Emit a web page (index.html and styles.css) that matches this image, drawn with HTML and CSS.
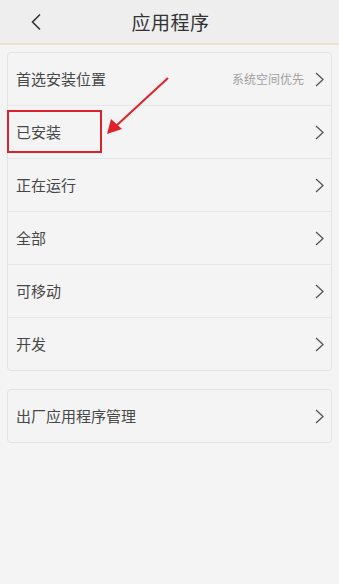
FILE: index.html
```html
<!DOCTYPE html>
<html lang="zh">
<head>
<meta charset="utf-8">
<link rel="stylesheet" href="styles.css">
</head>
<body>
<div class="page">
  <header class="bar">
    <svg class="back" width="12" height="18" viewBox="0 0 12 18"><path d="M10 1.5 L2.5 9 L10 16.5" fill="none" stroke="#333" stroke-width="1.6"/></svg>
    <div class="title">应用程序</div>
  </header>
  <div class="card">
    <div class="row"><span class="label">首选安装位置</span><span class="value">系统空间优先</span><svg class="chev" width="9" height="15" viewBox="0 0 9 15"><path d="M1 1 L8 7.5 L1 14" fill="none" stroke="#555" stroke-width="1.3"/></svg></div>
    <div class="row"><span class="label">已安装</span><svg class="chev" width="9" height="15" viewBox="0 0 9 15"><path d="M1 1 L8 7.5 L1 14" fill="none" stroke="#555" stroke-width="1.3"/></svg></div>
    <div class="row"><span class="label">正在运行</span><svg class="chev" width="9" height="15" viewBox="0 0 9 15"><path d="M1 1 L8 7.5 L1 14" fill="none" stroke="#555" stroke-width="1.3"/></svg></div>
    <div class="row"><span class="label">全部</span><svg class="chev" width="9" height="15" viewBox="0 0 9 15"><path d="M1 1 L8 7.5 L1 14" fill="none" stroke="#555" stroke-width="1.3"/></svg></div>
    <div class="row"><span class="label">可移动</span><svg class="chev" width="9" height="15" viewBox="0 0 9 15"><path d="M1 1 L8 7.5 L1 14" fill="none" stroke="#555" stroke-width="1.3"/></svg></div>
    <div class="row"><span class="label">开发</span><svg class="chev" width="9" height="15" viewBox="0 0 9 15"><path d="M1 1 L8 7.5 L1 14" fill="none" stroke="#555" stroke-width="1.3"/></svg></div>
  </div>
  <div class="card second">
    <div class="row"><span class="label">出厂应用程序管理</span><svg class="chev" width="9" height="15" viewBox="0 0 9 15"><path d="M1 1 L8 7.5 L1 14" fill="none" stroke="#555" stroke-width="1.3"/></svg></div>
  </div>
  <div class="highlight"></div>
  <svg class="arrow" width="339" height="200" viewBox="0 0 339 200">
    <line x1="168" y1="78" x2="116" y2="126" stroke="#e0222a" stroke-width="2"/>
    <path d="M107 134 L111 119 L122 129 Z" fill="#e0222a"/>
  </svg>
</div>
</body>
</html>
```
FILE: styles.css
```css
html, body { margin: 0; padding: 0; }
body {
  background: #f4f4f4;
  font-family: "Noto Sans CJK SC", "Noto Sans", sans-serif;
  width: 339px;
  height: 584px;
  overflow: hidden;
}
.page { position: relative; height: 584px; }
.bar {
  height: 43px;
  background: #eeeeee;
  border-bottom: 2px solid #efe1d2;
  display: flex;
  align-items: center;
  justify-content: center;
  position: relative;
}
.back { position: absolute; left: 30px; top: 13px; }
.title { font-size: 19px; color: #333; letter-spacing: 0.5px; padding-left: 2px; }
.card {
  margin: 7px 7px 0 7px;
  border: 1px solid #e3e3e3;
  border-radius: 4px;
  background: #f4f4f4;
}
.card.second { margin-top: 18px; }
.row {
  height: 52px;
  display: flex;
  align-items: center;
  padding: 0 7px 0 8px;
  border-top: 1px solid #e6e6e6;
}
.row:first-child { border-top: none; }
.label { font-size: 15px; color: #474747; flex: 1; margin-top: -2px; }
.value { font-size: 12px; color: #a0a0a0; margin-right: 11px; margin-top: -1px; }
.chev { display: block; }
.highlight {
  position: absolute;
  left: 7px;
  top: 110px;
  width: 91px;
  height: 39px;
  border: 2.5px solid #d9232d;
}
.arrow { position: absolute; left: 0; top: 0; }
```
